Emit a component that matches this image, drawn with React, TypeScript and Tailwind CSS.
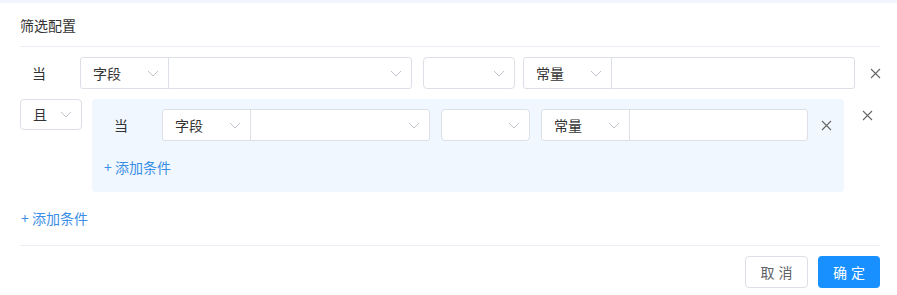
import React from 'react';

const Chevron = () => (
  <svg width="12" height="7" viewBox="0 0 12 7" className="shrink-0">
    <polyline points="1,1 6,6 11,1" fill="none" stroke="#c0c4cc" strokeWidth="1" />
  </svg>
);

const Close = ({ className = '' }: { className?: string }) => (
  <svg width="11" height="11" viewBox="0 0 11 11" className={className}>
    <path d="M1 1L10 10M10 1L1 10" stroke="#666" strokeWidth="1.1" fill="none" />
  </svg>
);

function Select({ label, className = '' }: { label?: string; className?: string }) {
  return (
    <div className={`h-8 shrink-0 flex items-center justify-between bg-white border border-[#dcdfe6] pl-3 pr-[9px] ${className}`}>
      <span className="text-[14px] text-[#333]">{label}</span>
      <Chevron />
    </div>
  );
}

function ConditionRow({ inner }: { inner?: boolean }) {
  return (
    <div className="flex items-center">
      <div className="w-[60px] shrink-0 pl-[12px] text-[14px] text-[#333]">当</div>
      <div className="flex items-center">
        <Select label="字段" className="w-[89px] rounded-l-[3px]" />
        <Select className={`${inner ? 'w-[180px]' : 'w-[244px]'} -ml-px rounded-r-[3px]`} />
        <Select className={`${inner ? 'w-[89px]' : 'w-[92px]'} ml-[11px] rounded-[4px]`} />
        <Select label="常量" className={`w-[89px] ${inner ? 'ml-[11px]' : 'ml-[8px]'} rounded-l-[3px]`} />
        <div className={`${inner ? 'w-[179px]' : 'w-[244px]'} h-8 -ml-px bg-white border border-[#dcdfe6] rounded-r-[3px]`} />
      </div>
      <div className={`${inner ? 'w-[36px]' : 'w-[33px] pl-[8px]'} shrink-0 flex justify-center`}>
        <Close />
      </div>
    </div>
  );
}

export default function App() {
  return (
    <div className="w-[897px] h-[295px] bg-white overflow-hidden" style={{ fontFamily: '"Noto Sans CJK SC", "Noto Sans", sans-serif' }}>
      <div className="h-[3px] bg-[#f2f6fc]" />
      <div className="pl-[20px] pr-[17px]">
        <div className="h-[44px] flex items-center border-b border-[#ebeef5] text-[14px] text-[#333] pt-[1px]">筛选配置</div>

        <div className="pt-[10px]">
          <ConditionRow />
        </div>

        <div className="flex items-start mt-[10px]">
          <div className="w-[62px] h-[31px] shrink-0 flex items-center justify-between border border-[#dcdfe6] rounded-[4px] pl-[12px] pr-[9px]">
            <span className="text-[14px] text-[#333]">且</span>
            <Chevron />
          </div>
          <div className="w-[752px] shrink-0 ml-[10px] bg-[#f0f7ff] rounded-[4px] pl-[10px] pt-[10px] pb-[13px]">
            <ConditionRow inner />
            <div className="mt-[14px] pl-[2px] text-[14px] text-[#3a8ee6] leading-[24px]">+&nbsp;添加条件</div>
          </div>
          <div className="flex-1 flex justify-center pt-[11px] pl-[10px]">
            <Close />
          </div>
        </div>

        <div className="h-[54px] flex items-center border-b border-[#ebeef5] pl-[1px] pb-[1px] text-[14px] text-[#3a8ee6]">+&nbsp;添加条件</div>

        <div className="flex justify-end gap-[10px] pt-[10px]">
          <button className="w-[63px] h-[32px] border border-[#dcdfe6] rounded-[4px] bg-white text-[14px] text-[#606266] tracking-[4px] pl-[4px]">取消</button>
          <button className="w-[62px] h-[32px] rounded-[4px] bg-[#1890ff] text-[14px] text-white tracking-[4px] pl-[4px]">确定</button>
        </div>
      </div>
    </div>
  );
}
